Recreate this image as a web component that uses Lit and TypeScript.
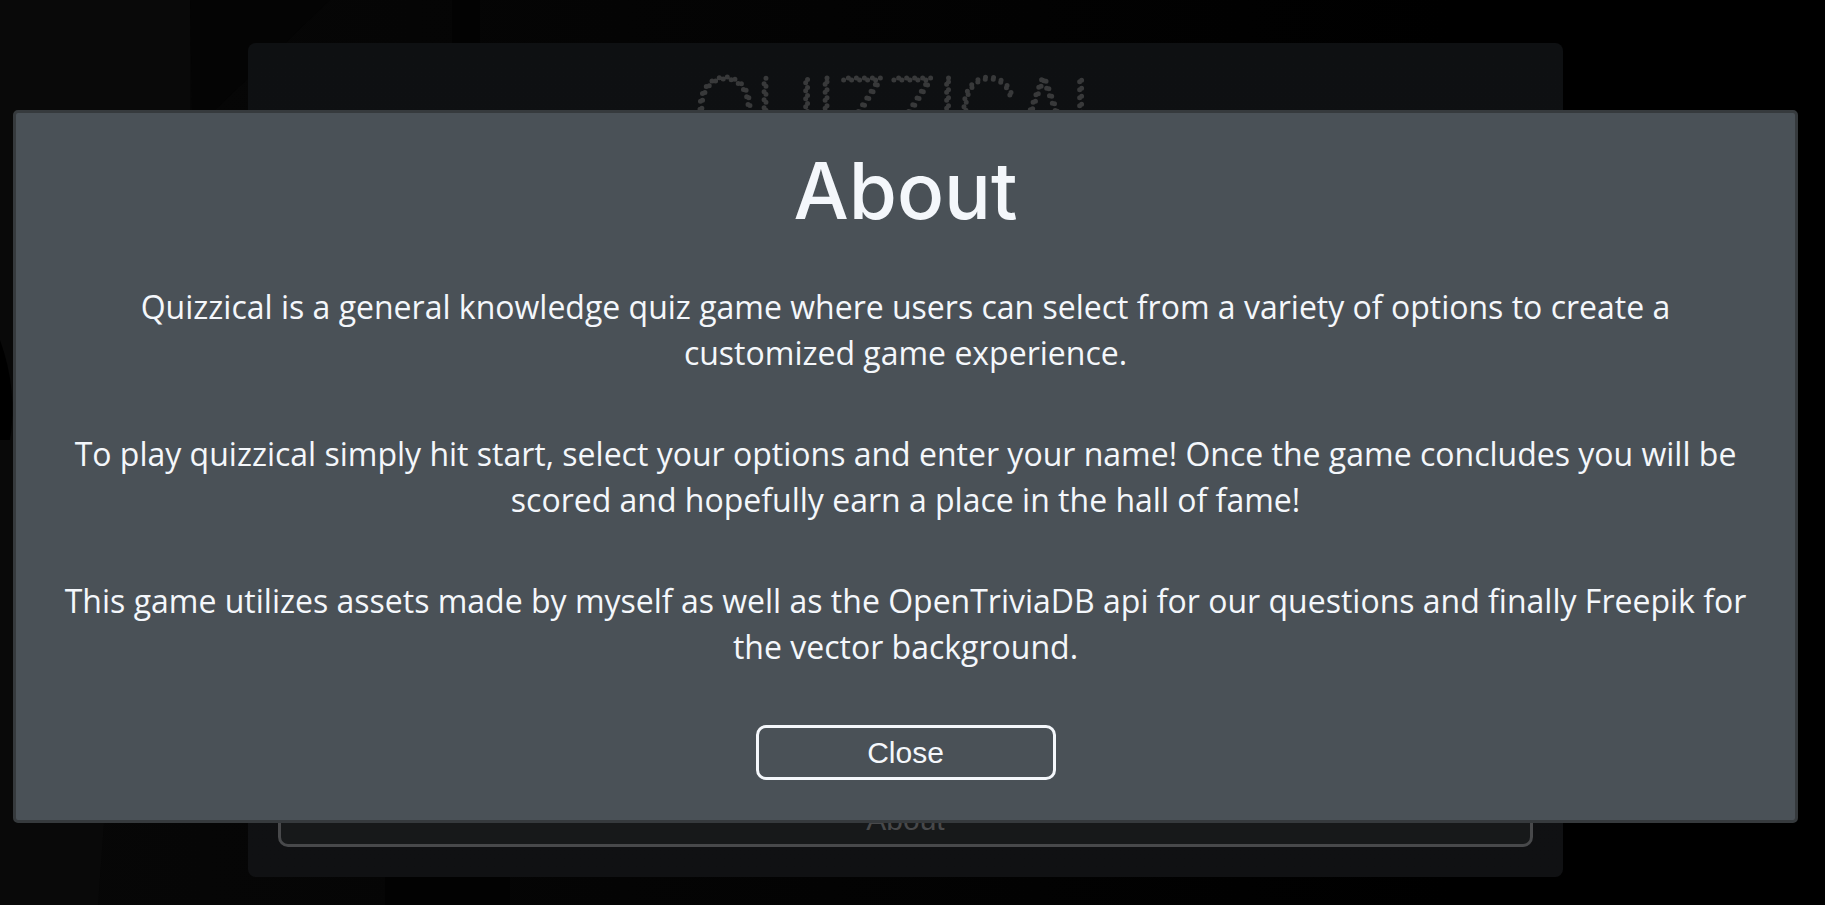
import { LitElement, html, css } from "lit";
import { customElement, state } from "lit/decorators.js";

@customElement("app-root")
export class AppRoot extends LitElement {
  static styles = css`
    :host {
      position: relative;
      min-height: 100vh;
      box-sizing: border-box;
      padding: 43px 14px 28px 0;
      background: #000;
      color: #f4f7fb;
      display: flex;
      overflow: hidden;
    }
    .scene {
      position: absolute;
      inset: 0;
      width: 100%;
      height: 100%;
    }
    .menu {
      position: relative;
      box-sizing: border-box;
      width: 100%;
      max-width: 1315px;
      margin: 0 auto;
      padding: 30px;
      border-radius: 8px;
      background: linear-gradient(#0e1012, #101113);
      display: flex;
      flex-direction: column;
      justify-content: space-between;
    }
    .brand {
      margin: 0;
      text-align: center;
    }
    .logo {
      display: block;
      width: 100%;
      height: 88px;
    }
    .logo text {
      font-family: Inter, sans-serif;
      font-size: 83px;
      font-weight: 100;
      fill: none;
      stroke: #38393a;
      stroke-width: 5px;
      stroke-linecap: round;
      stroke-dasharray: 0 8;
      text-anchor: middle;
    }
    .actions {
      display: flex;
      flex-direction: column;
    }
    button {
      box-sizing: border-box;
      height: 55px;
      border: 3px solid currentColor;
      border-radius: 10px;
      padding: 0 16px;
      background: none;
      font: 30px/34px "Liberation Sans", Arial, sans-serif;
      color: #f4f7fb;
      cursor: pointer;
    }
    .actions button {
      border-color: #48494b;
      background: #17191a;
      color: #48494b;
    }
    .modal {
      position: absolute;
      top: 110px;
      left: 13px;
      right: 27px;
      width: auto;
      margin: 0;
      box-sizing: border-box;
      border: 3px solid #363a3d;
      border-radius: 5px;
      padding: 40px;
      background: #4a5157;
      color: inherit;
      display: flex;
      flex-direction: column;
      align-items: center;
      gap: 55px;
      text-align: center;
    }
    .modal h2 {
      margin: 0;
      font: 500 78px/76px Inter, sans-serif;
    }
    .modal p {
      margin: 0;
      font: 32px/46px "Open Sans", "Noto Sans", sans-serif;
    }
    .close {
      width: 300px;
    }
  `;

  @state() private aboutOpen = true;

  private paragraphs = [
    "Quizzical is a general knowledge quiz game where users can select from a variety of options to create a customized game experience.",
    "To play quizzical simply hit start, select your options and enter your name! Once the game concludes you will be scored and hopefully earn a place in the hall of fame!",
    "This game utilizes assets made by myself as well as the OpenTriviaDB api for our questions and finally Freepik for the vector background.",
  ];

  render() {
    return html`
      <svg class="scene" viewBox="0 0 1825 905" preserveAspectRatio="none" aria-hidden="true">
        <defs>
          <linearGradient id="fade">
            <stop offset="0" stop-color="#070707" />
            <stop offset="1" stop-color="#000" />
          </linearGradient>
        </defs>
        <rect width="1450" height="905" fill="url(#fade)" />
        <path d="M0 0H190V130L104 823L98 905H0Z" fill="#090909" />
        <path d="M190 0H330L215 110H192Z" fill="#040404" />
        <path d="M452 0H480V43H452ZM385 877H510V905H385Z" fill="#020202" />
        <path d="M0 340Q18 390 10 440H0Z" fill="#000" />
      </svg>
      <main class="menu">
        <h1 class="brand">
          <svg class="logo" role="img" aria-label="Quizzical">
            <text x="50%" y="65">QUIZZICAL</text>
          </svg>
        </h1>
        <div class="actions">
          <button type="button" @click=${() => (this.aboutOpen = true)}>About</button>
        </div>
      </main>
      ${this.aboutOpen
        ? html`<dialog class="modal" open aria-labelledby="about-title">
            <h2 id="about-title">About</h2>
            ${this.paragraphs.map((text) => html`<p>${text}</p>`)}
            <button class="close" type="button" @click=${() => (this.aboutOpen = false)}>Close</button>
          </dialog>`
        : null}
    `;
  }
}
